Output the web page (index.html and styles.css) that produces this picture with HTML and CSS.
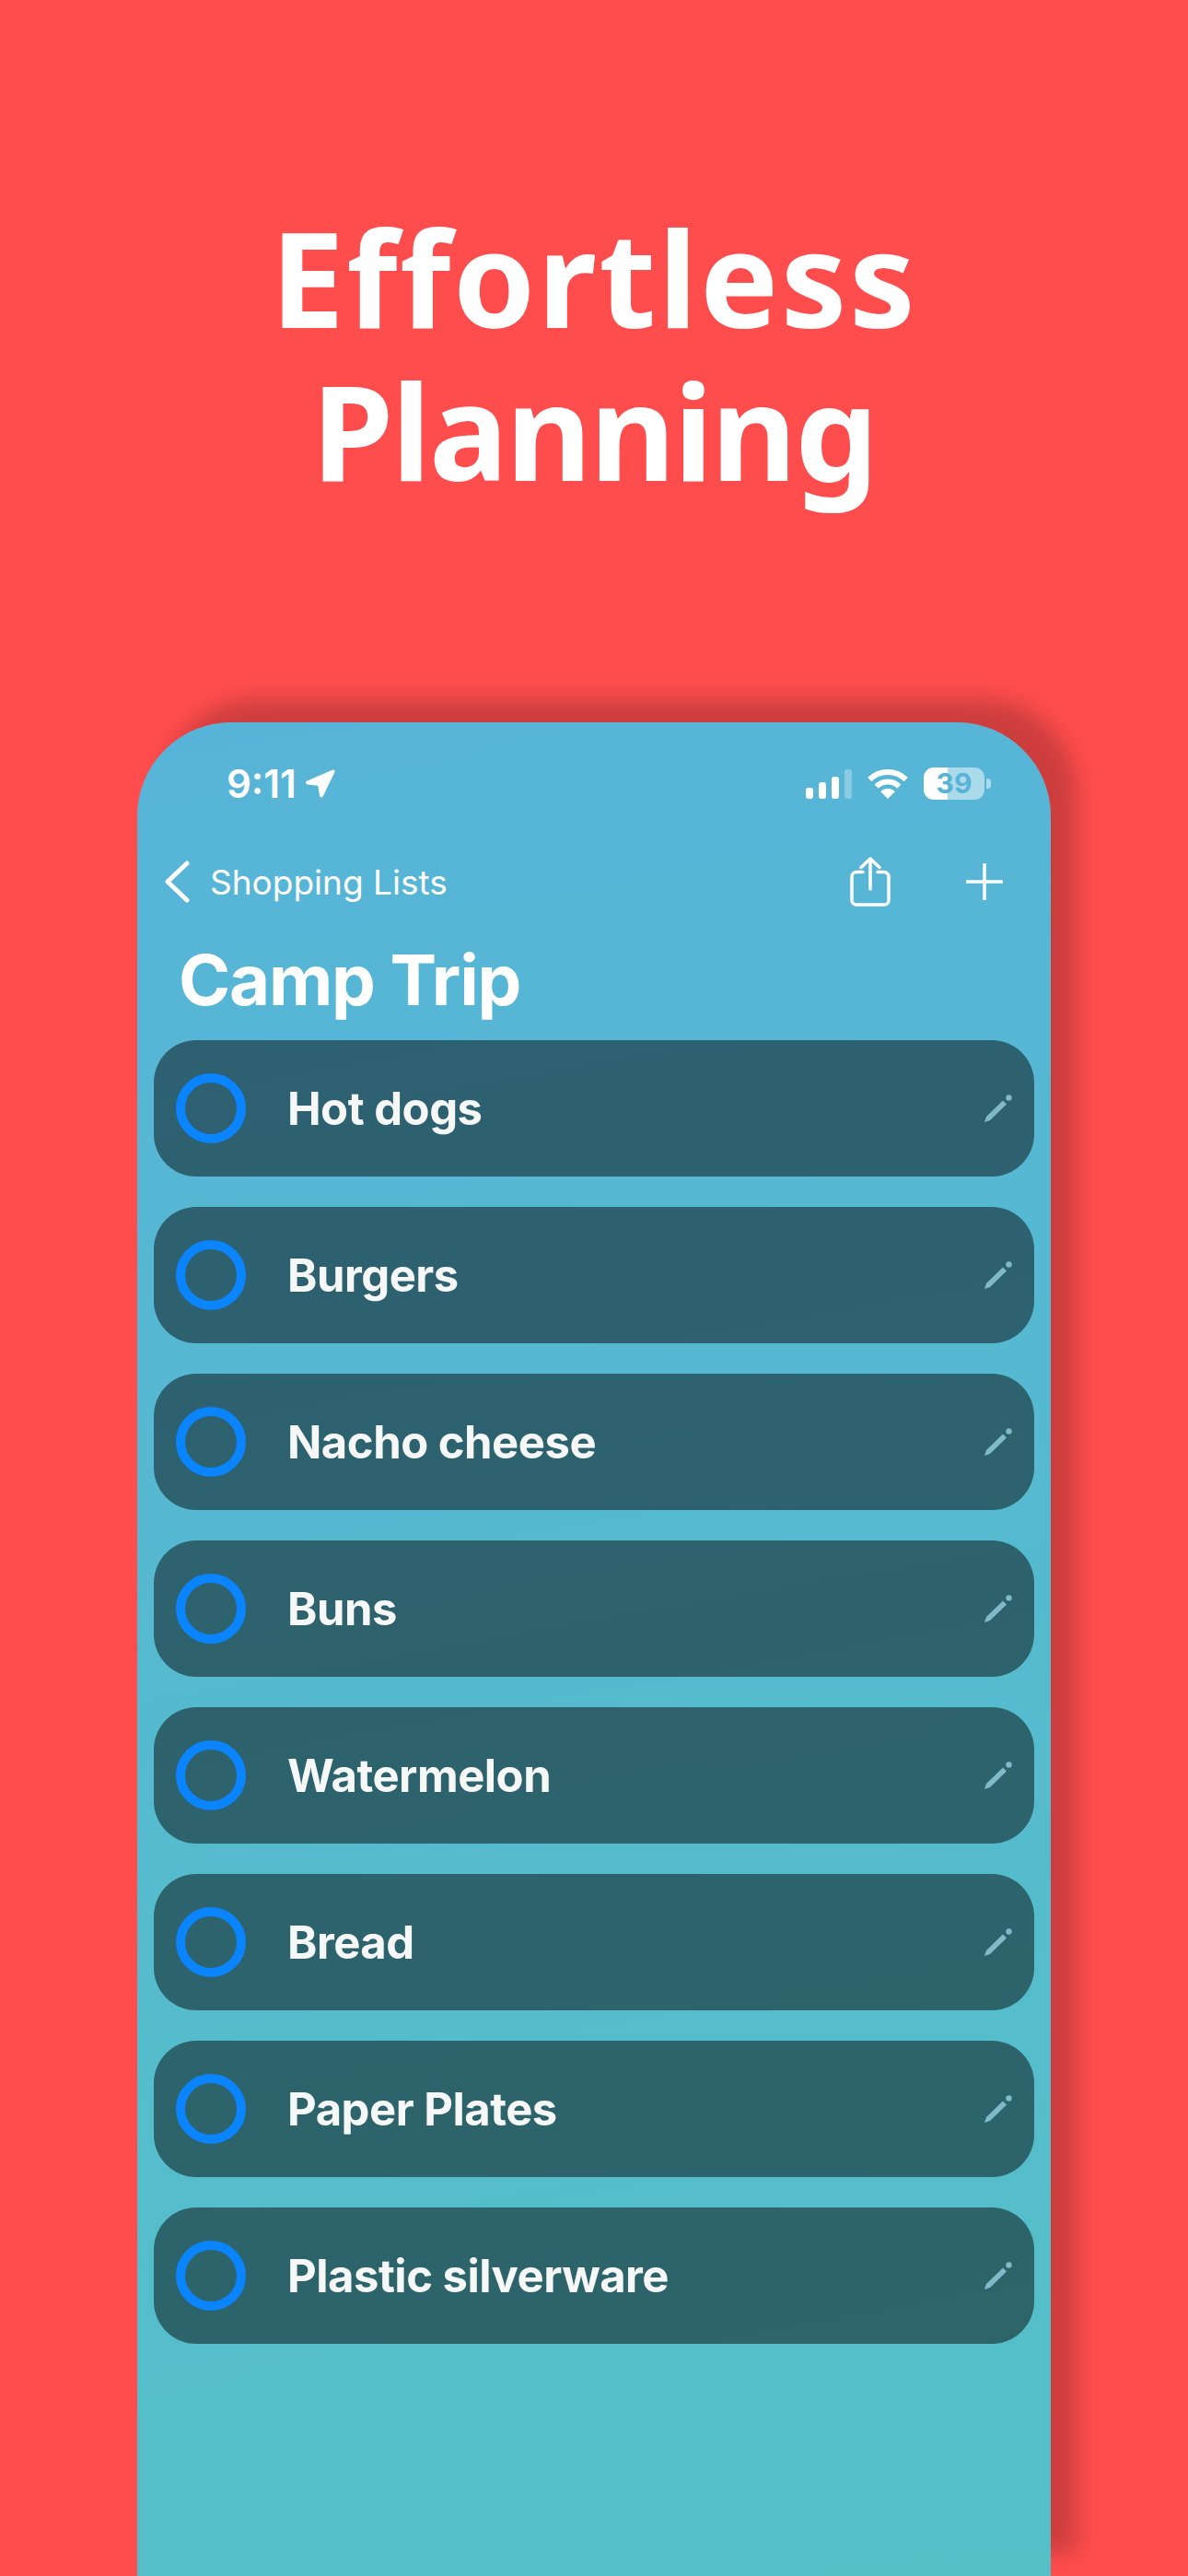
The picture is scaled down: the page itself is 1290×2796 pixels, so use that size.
FILE: index.html
```html
<!DOCTYPE html>
<html lang="en">
<head>
<meta charset="UTF-8" />
<title>Effortless Planning</title>
<link rel="stylesheet" href="styles.css">
</head>
<body>

<svg class="defs" width="0" height="0">
  <symbol id="pencil" viewBox="0 0 32 32">
    <path d="M1 31 L3 25 L21 7.500 L25 11.500 L7 29 Z" />
    <circle cx="27.500" cy="4.500" r="3.200" />
  </symbol>
</svg>

<h1 class="headline">
  <span class="line-wide">Effortless</span>
  <span class="line-narrow">Planning</span>
</h1>

<div class="phone">
  <!-- Status bar -->
  <div class="status">
    <div class="status-time">
      <span>9:11</span>
      <svg class="arrow" width="33" height="31" viewBox="0 0 33 31">
        <path d="M30.500 2.500 L3 14.500 L16 16 L18 28.500 Z" />
      </svg>
    </div>
    <div class="status-icons">
      <div class="signal">
        <span class="bar bar1"></span>
        <span class="bar bar2"></span>
        <span class="bar bar3"></span>
        <span class="bar bar4"></span>
      </div>
      <svg class="wifi" width="44" height="33" viewBox="0 0 44 33">
        <path class="wifi-arc" d="M2.200 12.200 A28 28 0 0 1 41.800 12.200" />
        <path class="wifi-arc" d="M9.630 19.630 A17.500 17.500 0 0 1 34.370 19.630" />
        <path class="wifi-dot" d="M22 33 L14.200 25.200 A11 11 0 0 1 29.800 25.200 Z" />
      </svg>
      <div class="battery-wrap">
        <div class="battery">39</div>
        <span class="battery-tip"></span>
      </div>
    </div>
  </div>

  <!-- Navigation -->
  <div class="nav">
    <div class="nav-back">
      <svg class="chevron" width="28" height="46" viewBox="0 0 28 46">
        <path d="M25 3 L4 23 L25 43" />
      </svg>
      <span>Shopping Lists</span>
    </div>
    <div class="nav-actions">
      <svg class="share" width="44" height="54" viewBox="0 0 44 54">
        <path d="M14 16.500 H7 A5 5 0 0 0 2 21.500 V47 A5 5 0 0 0 7 52 H37 A5 5 0 0 0 42 47 V21.500 A5 5 0 0 0 37 16.500 H30" />
        <path d="M22 35 V2 M12 11.500 L22 2 L32 11.500" />
      </svg>
      <svg class="plus" width="40" height="40" viewBox="0 0 40 40">
        <path d="M20 1 V39 M1 20 H39" />
      </svg>
    </div>
  </div>

  <h2 class="title">Camp Trip</h2>

  <ul class="items">
    <li class="item">
      <span class="ring"></span>
      <span class="item-name">Hot dogs</span>
      <svg class="pencil"><use href="#pencil" /></svg>
    </li>
    <li class="item">
      <span class="ring"></span>
      <span class="item-name">Burgers</span>
      <svg class="pencil"><use href="#pencil" /></svg>
    </li>
    <li class="item">
      <span class="ring"></span>
      <span class="item-name">Nacho cheese</span>
      <svg class="pencil"><use href="#pencil" /></svg>
    </li>
    <li class="item">
      <span class="ring"></span>
      <span class="item-name">Buns</span>
      <svg class="pencil"><use href="#pencil" /></svg>
    </li>
    <li class="item">
      <span class="ring"></span>
      <span class="item-name">Watermelon</span>
      <svg class="pencil"><use href="#pencil" /></svg>
    </li>
    <li class="item">
      <span class="ring"></span>
      <span class="item-name">Bread</span>
      <svg class="pencil"><use href="#pencil" /></svg>
    </li>
    <li class="item">
      <span class="ring"></span>
      <span class="item-name">Paper Plates</span>
      <svg class="pencil"><use href="#pencil" /></svg>
    </li>
    <li class="item">
      <span class="ring"></span>
      <span class="item-name">Plastic silverware</span>
      <svg class="pencil"><use href="#pencil" /></svg>
    </li>
  </ul>
</div>

</body>
</html>
```

FILE: styles.css
```css
html, body {
  margin: 0;
  height: 2796px;
  overflow: hidden;
}
body {
  background: #ff4d4d;
  font-family: Inter, "Noto Sans", sans-serif;
  color: white;
  display: flex;
  flex-direction: column;
  align-items: center;
}
.defs {
  position: absolute;
}

.headline {
  margin: 0;
  height: 566px;
  padding-top: 218px;
  font-family: "Noto Sans", sans-serif;
  font-size: 143px;
  font-weight: 700;
  line-height: 166px;
  text-align: center;
}
.headline span {
  display: block;
}
.line-wide {
  letter-spacing: 2.500px;
}
.line-narrow {
  letter-spacing: -2px;
}

.phone {
  width: 992px;
  height: 2012px;
  flex-shrink: 0;
  border-radius: 102px 102px 0 0;
  background: linear-gradient(170deg, #57b4d8 0%, #54c0c6 100%);
  box-shadow: 28px -25px 24px rgba(0, 0, 0, 0.2);
}

/* Status bar */
.status {
  display: flex;
  justify-content: space-between;
  align-items: center;
  height: 35px;
  padding: 49px 65px 0 97px;
}
.status-time {
  display: flex;
  align-items: center;
  gap: 9px;
  font-size: 42px;
  font-weight: 600;
}
.arrow path {
  fill: white;
  stroke: white;
  stroke-width: 4;
  stroke-linejoin: round;
}
.status-icons {
  display: flex;
  align-items: center;
  gap: 17px;
}
.signal {
  display: flex;
  align-items: flex-end;
  gap: 6px;
  height: 32px;
}
.bar {
  width: 8px;
  border-radius: 3px;
  background: white;
}
.bar1 { height: 12px; }
.bar2 { height: 18px; }
.bar3 { height: 24px; }
.bar4 { height: 32px; background: rgba(255, 255, 255, 0.3); }
.wifi-arc {
  fill: none;
  stroke: white;
  stroke-width: 6;
}
.wifi-dot {
  fill: white;
}
.battery-wrap {
  display: flex;
  align-items: center;
  gap: 2px;
}
.battery {
  width: 66px;
  height: 35px;
  border-radius: 11px;
  background: linear-gradient(to right, white 39%, rgba(255, 255, 255, 0.5) 39%);
  color: #57b4d8;
  font-size: 30px;
  font-weight: 700;
  line-height: 35px;
  text-align: center;
}
.battery-tip {
  width: 5px;
  height: 11px;
  border-radius: 0 4px 4px 0;
  background: rgba(255, 255, 255, 0.5);
}

/* Navigation */
.nav {
  display: flex;
  justify-content: space-between;
  align-items: center;
  height: 54px;
  margin-top: 62px;
  padding: 0 52px 0 29px;
}
.nav-back {
  display: flex;
  align-items: center;
  gap: 22px;
  font-size: 37px;
}
.chevron path {
  fill: none;
  stroke: white;
  stroke-width: 5;
  stroke-linecap: round;
  stroke-linejoin: round;
}
.nav-actions {
  display: flex;
  align-items: center;
  gap: 82px;
}
.share path, .plus path {
  fill: none;
  stroke: white;
  stroke-width: 3.500;
  stroke-linecap: round;
  stroke-linejoin: round;
}

.title {
  margin: 0;
  height: 90px;
  padding: 34px 0 0 45px;
  font-size: 76px;
  font-weight: 700;
  letter-spacing: -1.200px;
  line-height: 90px;
}

/* List */
.items {
  list-style: none;
  margin: 0;
  padding: 21px 18px 0;
  display: flex;
  flex-direction: column;
  gap: 33px;
}
.item {
  display: flex;
  align-items: center;
  height: 148px;
  padding: 0 23px 0 24px;
  border-radius: 46px;
  background: rgba(0, 0, 0, 0.47);
}
.ring {
  box-sizing: border-box;
  width: 76px;
  height: 76px;
  border: 10px solid #0a84ff;
  border-radius: 50%;
}
.item-name {
  flex: 1;
  margin-left: 45px;
  color: #f6f8f8;
  font-size: 49px;
  font-weight: 700;
  letter-spacing: -0.500px;
}
.pencil {
  width: 32px;
  height: 32px;
  fill: #80bac8;
}
```
